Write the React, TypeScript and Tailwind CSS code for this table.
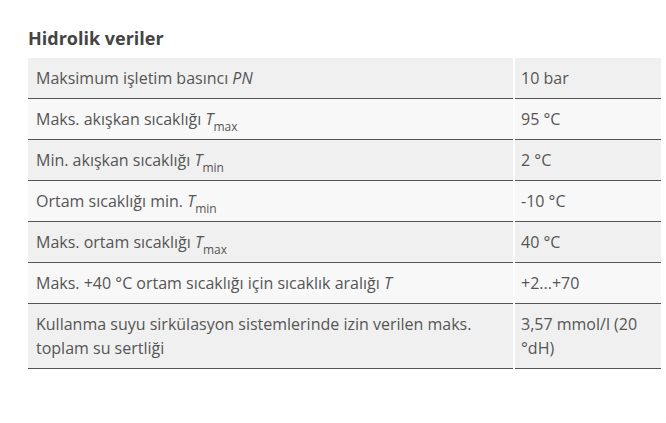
import React from 'react';

type Row = {
  label: React.ReactNode;
  value: React.ReactNode;
  dark: boolean;
};

const Sub = ({ base, sub }: { base: string; sub: string }) => (
  <>
    <i>{base}</i>
    <sub className="text-[12px] not-italic align-[-3px] leading-none">{sub}</sub>
  </>
);

const rows: Row[] = [
  { label: <>Maksimum işletim basıncı <i>PN</i></>, value: '10 bar', dark: true },
  { label: <>Maks. akışkan sıcaklığı <Sub base="T" sub="max" /></>, value: '95 °C', dark: false },
  { label: <>Min. akışkan sıcaklığı <Sub base="T" sub="min" /></>, value: '2 °C', dark: true },
  { label: <>Ortam sıcaklığı min. <Sub base="T" sub="min" /></>, value: '-10 °C', dark: false },
  { label: <>Maks. ortam sıcaklığı <Sub base="T" sub="max" /></>, value: '40 °C', dark: true },
  { label: <>Maks. +40 °C ortam sıcaklığı için sıcaklık aralığı <i>T</i></>, value: '+2...+70', dark: false },
  {
    label: 'Kullanma suyu sirkülasyon sistemlerinde izin verilen maks. toplam su sertliği',
    value: '3,57 mmol/l (20 °dH)',
    dark: true,
  },
];

export default function App() {
  return (
    <div className="w-[666px] h-[423px] bg-white pl-[28px] pt-[26px] font-['Open_Sans',sans-serif] text-[#555]">
      <h2 className="text-[18px] leading-6 font-bold text-[#444] mb-[8px]">Hidrolik veriler</h2>
      <div className="grid grid-cols-[485px_146px] gap-x-[2px]">
        {rows.map((r, i) => {
          const bg = r.dark ? 'bg-[#f0f0f0]' : 'bg-[#f8f8f8]';
          return (
            <React.Fragment key={i}>
              <div className={`${bg} px-2 py-2 text-[16px] leading-6 border-b border-[#555]`}>{r.label}</div>
              <div className={`${bg} px-[6px] py-2 text-[16px] leading-6 border-b border-[#555]`}>{r.value}</div>
            </React.Fragment>
          );
        })}
      </div>
    </div>
  );
}
